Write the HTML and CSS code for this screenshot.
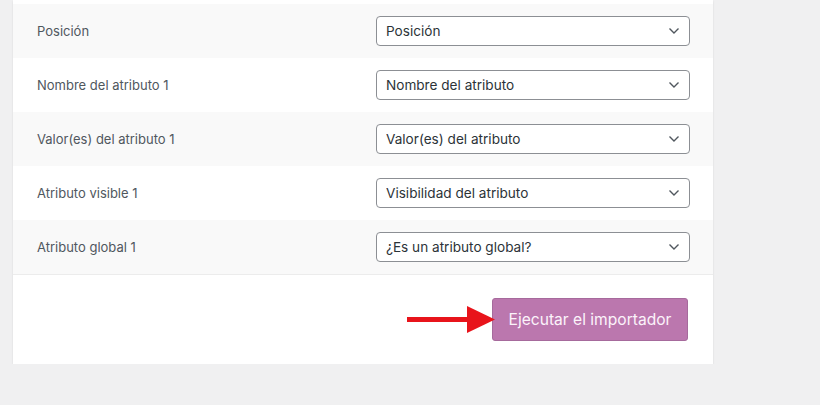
FILE: index.html
```html
<!DOCTYPE html>
<html lang="es">
<head>
  <meta charset="UTF-8" />
  <title>Importador de productos</title>
  <link rel="stylesheet" href="styles.css">
</head>
<body>
  <div class="card">
    <table class="mapping">
      <tbody>
        <tr>
          <td class="label">Posición</td>
          <td class="field">
            <div class="select-wrap">
              <select><option>Posición</option></select>
              <svg class="chevron" width="12" height="8" viewBox="0 0 12 8"><path d="M1.5 1.5 L6 6 L10.5 1.5" fill="none" stroke="#50575e" stroke-width="1.4"/></svg>
            </div>
          </td>
        </tr>
        <tr>
          <td class="label">Nombre del atributo 1</td>
          <td class="field">
            <div class="select-wrap">
              <select><option>Nombre del atributo</option></select>
              <svg class="chevron" width="12" height="8" viewBox="0 0 12 8"><path d="M1.5 1.5 L6 6 L10.5 1.5" fill="none" stroke="#50575e" stroke-width="1.4"/></svg>
            </div>
          </td>
        </tr>
        <tr>
          <td class="label">Valor(es) del atributo 1</td>
          <td class="field">
            <div class="select-wrap">
              <select><option>Valor(es) del atributo</option></select>
              <svg class="chevron" width="12" height="8" viewBox="0 0 12 8"><path d="M1.5 1.5 L6 6 L10.5 1.5" fill="none" stroke="#50575e" stroke-width="1.4"/></svg>
            </div>
          </td>
        </tr>
        <tr>
          <td class="label">Atributo visible 1</td>
          <td class="field">
            <div class="select-wrap">
              <select><option>Visibilidad del atributo</option></select>
              <svg class="chevron" width="12" height="8" viewBox="0 0 12 8"><path d="M1.5 1.5 L6 6 L10.5 1.5" fill="none" stroke="#50575e" stroke-width="1.4"/></svg>
            </div>
          </td>
        </tr>
        <tr>
          <td class="label">Atributo global 1</td>
          <td class="field">
            <div class="select-wrap">
              <select><option>¿Es un atributo global?</option></select>
              <svg class="chevron" width="12" height="8" viewBox="0 0 12 8"><path d="M1.5 1.5 L6 6 L10.5 1.5" fill="none" stroke="#50575e" stroke-width="1.4"/></svg>
            </div>
          </td>
        </tr>
      </tbody>
    </table>

    <div class="actions">
      <div class="button-wrap">
        <!-- flecha roja de la captura -->
        <svg class="arrow" width="90" height="28" viewBox="0 0 90 28">
          <rect x="0" y="11" width="62" height="5" fill="#e8141b"/>
          <polygon points="60,0 88,13.5 60,27" fill="#e8141b"/>
        </svg>
        <button type="submit" class="run-button">Ejecutar el importador</button>
      </div>
    </div>
  </div>
</body>
</html>
```

FILE: styles.css
```css
body {
  margin: 0;
  padding: 0;
  background-color: #f0f0f1;
  font-family: Inter, "Liberation Sans", sans-serif;
  color: #50575e;
}

.card {
  width: 700px;
  margin-left: 13px;
  padding-top: 4px;
  background-color: #fff;
  box-shadow: 0 1px 2px rgba(0, 0, 0, 0.1);
}

.mapping {
  width: 100%;
  border-collapse: collapse;
}

.mapping tr {
  height: 54px;
}

.mapping tr:nth-child(odd) {
  background-color: #f9f9f9;
}

.label {
  padding: 0 0 0 24px;
  font-size: 13px;
  color: #50575e;
}

.field {
  width: 314px;
  padding: 0 23px 0 0;
}

.select-wrap {
  position: relative;
}

select {
  appearance: none;
  -webkit-appearance: none;
  display: block;
  width: 314px;
  height: 30px;
  padding: 0 28px 0 9px;
  border: 1px solid #8c8f94;
  border-radius: 4px;
  background-color: #fff;
  font-family: Inter, "Liberation Sans", sans-serif;
  font-size: 13.6px;
  color: #2c3338;
}

.chevron {
  position: absolute;
  right: 10px;
  top: 11px;
  pointer-events: none;
}

.actions {
  display: flex;
  justify-content: flex-end;
  padding: 23px 25px 23px 0;
  border-top: 1px solid #ececec;
}

.button-wrap {
  position: relative;
}

.arrow {
  position: absolute;
  left: -85px;
  top: 8px;
}

.run-button {
  width: 196px;
  height: 43px;
  padding: 0;
  background-color: #bb77ae;
  border: 1px solid #a66a9c;
  border-radius: 3px;
  color: #fbf3fa;
  font-family: Inter, "Liberation Sans", sans-serif;
  font-size: 15.6px;
  cursor: pointer;
}
```
